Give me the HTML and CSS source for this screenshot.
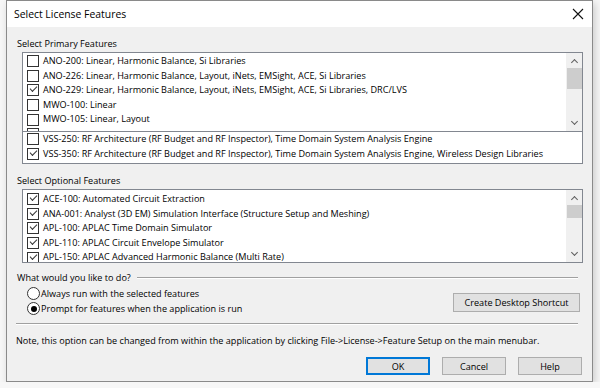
FILE: index.html
```html
<!DOCTYPE html>
<html lang="en">
  <head>
    <meta charset="UTF-8" />
    <title>Select License Features</title>
    <link rel="stylesheet" href="styles.css">
  </head>
  <body>
    <div class="dialog">
      <div class="titlebar">
        <span class="title">Select License Features</span>
        <svg class="close" width="12" height="12" viewBox="0 0 12 12">
          <path d="M1 1 L11 11 M11 1 L1 11" stroke="#111" stroke-width="1.1" fill="none" />
        </svg>
      </div>

      <div class="content">
        <div class="label">Select Primary Features</div>
        <div class="listbox primary">
          <div class="pane upper">
            <div class="rows">
              <div class="row"><span class="cb"></span>ANO-200: Linear, Harmonic Balance, Si Libraries</div>
              <div class="row"><span class="cb"></span>ANO-226: Linear, Harmonic Balance, Layout, iNets, EMSight, ACE, Si Libraries</div>
              <div class="row"><span class="cb on"></span>ANO-229: Linear, Harmonic Balance, Layout, iNets, EMSight, ACE, Si Libraries, DRC/LVS</div>
              <div class="row"><span class="cb"></span>MWO-100: Linear</div>
              <div class="row"><span class="cb"></span>MWO-105: Linear, Layout</div>
              <div class="row"><span class="cb"></span></div>
            </div>
            <div class="scrollbar">
              <span class="arrow up"></span>
              <span class="thumb t1"></span>
              <span class="arrow down"></span>
            </div>
          </div>
          <div class="pane lower">
            <div class="row"><span class="cb"></span>VSS-250: RF Architecture (RF Budget and RF Inspector), Time Domain System Analysis Engine</div>
            <div class="row"><span class="cb on"></span>VSS-350: RF Architecture (RF Budget and RF Inspector), Time Domain System Analysis Engine, Wireless Design Libraries</div>
          </div>
        </div>

        <div class="label second">Select Optional Features</div>
        <div class="listbox optional">
          <div class="pane upper">
            <div class="rows">
              <div class="row"><span class="cb on"></span>ACE-100: Automated Circuit Extraction</div>
              <div class="row"><span class="cb on"></span>ANA-001: Analyst (3D EM) Simulation Interface (Structure Setup and Meshing)</div>
              <div class="row"><span class="cb on"></span>APL-100: APLAC Time Domain Simulator</div>
              <div class="row"><span class="cb on"></span>APL-110: APLAC Circuit Envelope Simulator</div>
              <div class="row"><span class="cb on"></span>APL-150: APLAC Advanced Harmonic Balance (Multi Rate)</div>
            </div>
            <div class="scrollbar">
              <span class="arrow up"></span>
              <span class="thumb t2"></span>
              <span class="arrow down"></span>
            </div>
          </div>
        </div>

        <div class="group-head">
          <span>What would you like to do?</span>
          <span class="rule"></span>
        </div>
        <div class="choices">
          <div class="radios">
            <div class="radio-row"><span class="radio"></span>Always run with the selected features</div>
            <div class="radio-row"><span class="radio on"></span>Prompt for features when the application is run</div>
          </div>
          <button class="btn shortcut">Create Desktop Shortcut</button>
        </div>
        <div class="sep"></div>

        <div class="note">Note, this option can be changed from within the application by clicking File-&gt;License-&gt;Feature Setup on the main menubar.</div>

        <div class="actions">
          <button class="btn default">OK</button>
          <button class="btn">Cancel</button>
          <button class="btn">Help</button>
        </div>
      </div>
    </div>
  </body>
</html>
```

FILE: styles.css
```css
body {
  margin: 0;
  background: #f7f7f7;
  font-family: "Open Sans", "Noto Sans", sans-serif;
  font-size: 9.1px;
  color: #000;
}

.dialog {
  margin-left: 6px;
  width: 585px;
  height: 380px;
  border: 1px solid #8a8a8a;
  background: #f0f0f0;
  box-shadow: 2px 3px 8px rgba(0, 0, 0, 0.18);
}

.titlebar {
  height: 26px;
  background: #fff;
  display: flex;
  align-items: center;
  justify-content: space-between;
  padding: 0 8px 0 7px;
}

.title {
  font-size: 10.4px;
}

.content {
  padding: 8px 9px 0 9px;
}

.label {
  height: 17px;
  line-height: 17px;
  padding-left: 1px;
}

.label.second {
  margin-top: 8px;
}

.listbox {
  margin-left: 6px;
  width: 559px;
  border: 1px solid #828790;
  background: #fff;
}

.pane {
  display: flex;
  overflow: hidden;
}

.primary .upper {
  height: 78px;
  border-bottom: 1px solid #828790;
}

.primary .lower {
  flex-direction: column;
  height: 31px;
}

.optional {
  margin-bottom: 7px;
}

.optional .upper {
  height: 72px;
}

.rows {
  flex: 1;
  overflow: hidden;
  padding-top: 1px;
}

.optional .rows {
  padding-top: 2px;
}

.row {
  height: 14.6px;
  line-height: 14.6px;
  display: flex;
  align-items: center;
  white-space: nowrap;
  padding-left: 4px;
}

.cb {
  position: relative;
  width: 10px;
  height: 10px;
  border: 1px solid #333;
  background: #fff;
  margin-right: 4px;
  flex: none;
}

.cb.on::after {
  content: "";
  position: absolute;
  left: 2px;
  top: 1px;
  width: 6px;
  height: 3px;
  border-left: 1px solid #333;
  border-bottom: 1px solid #333;
  transform: rotate(-45deg);
}

.scrollbar {
  width: 16px;
  flex: none;
  background: #f0f0f0;
  display: flex;
  flex-direction: column;
  align-items: center;
}

.arrow {
  width: 4px;
  height: 4px;
  border-left: 1.3px solid #606060;
  border-top: 1.3px solid #606060;
  margin: 6px 0 3px;
}

.arrow.up {
  transform: rotate(45deg);
  margin-top: 7px;
}

.arrow.down {
  transform: rotate(225deg);
  margin-top: auto;
  margin-bottom: 7px;
}

.thumb {
  width: 15px;
  background: #cdcdcd;
}

.t1 {
  height: 21px;
}

.t2 {
  height: 13px;
}

.group-head {
  display: flex;
  align-items: center;
  height: 15px;
  padding-left: 1px;
}

.rule {
  flex: 1;
  margin: 1px 5px 0 6px;
  border-top: 1px solid #a0a0a0;
  border-bottom: 1px solid #fff;
}

.choices {
  display: flex;
  justify-content: space-between;
  align-items: flex-start;
  margin-top: 1px;
  padding-right: 3px;
}

.radios {
  padding-left: 11px;
}

.radio-row {
  display: flex;
  align-items: center;
  height: 15px;
}

.radio {
  position: relative;
  width: 11px;
  height: 11px;
  border: 1px solid #333;
  border-radius: 50%;
  background: #fff;
  margin-right: 1px;
}

.radio.on::after {
  content: "";
  position: absolute;
  left: 2.5px;
  top: 2.5px;
  width: 6px;
  height: 6px;
  border-radius: 50%;
  background: #000;
}

.btn {
  font-family: inherit;
  font-size: 9.1px;
  color: #000;
  background: #e1e1e1;
  border: 1px solid #adadad;
  height: 19px;
  padding: 0;
}

.shortcut {
  width: 127px;
  margin-top: 7px;
}

.sep {
  margin: 7px 5px 0 0;
  border-top: 1px solid #a0a0a0;
  border-bottom: 1px solid #fff;
}

.note {
  height: 17px;
  line-height: 17px;
  margin-top: 7px;
  white-space: nowrap;
}

.actions {
  display: flex;
  justify-content: flex-end;
  gap: 12px;
  margin-top: 8px;
  padding-right: 1px;
}

.actions .btn {
  width: 64px;
  height: 18px;
}

.btn.default {
  border-color: #0078d7;
  box-shadow: inset 0 0 0 1px #0078d7;
}
```
